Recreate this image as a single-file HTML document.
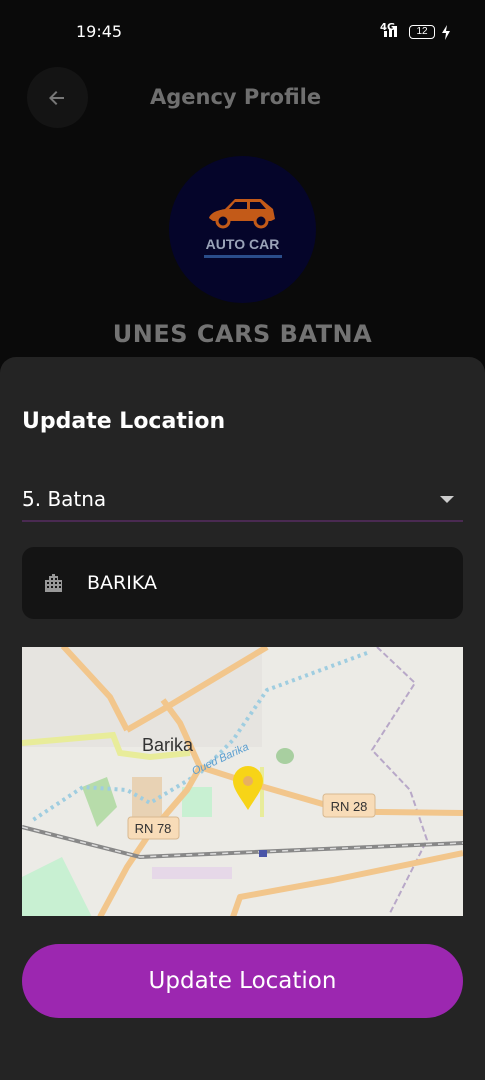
<!DOCTYPE html>
<html><head><meta charset="utf-8">
<style>
*{margin:0;padding:0;box-sizing:border-box}
body{width:485px;height:1080px;background:#0a0a0a;font-family:"Liberation Sans","DejaVu Sans",sans-serif;position:relative;overflow:hidden}
.abs{position:absolute}
</style></head><body>
<div class="abs" style="left:76px;top:22px;color:#fff;font-size:16px;font-family:'DejaVu Sans',sans-serif">19:45</div>
<div class="abs" style="left:380px;top:22px;color:#fff;font-size:10px;font-weight:bold;font-family:'DejaVu Sans',sans-serif">4G</div>
<svg class="abs" style="left:384px;top:25px" width="20" height="14"><rect x="0" y="6" width="3" height="6" fill="#fff"/><rect x="5" y="4" width="3" height="8" fill="#fff"/><rect x="10" y="1" width="3" height="11" fill="#fff"/></svg>
<div class="abs" style="left:409px;top:25px;width:26px;height:14px;border:1.5px solid #fff;border-radius:4px;color:#fff;font-size:10px;text-align:center;line-height:11px">12</div>
<svg class="abs" style="left:441px;top:25px" width="10" height="15"><path d="M6 0L1 8h4l-1 7 5-9H5z" fill="#fff"/></svg>

<div class="abs" style="left:27px;top:67px;width:61px;height:61px;border-radius:50%;background:#141414"></div>
<svg class="abs" style="left:45px;top:86px" width="24" height="24"><path d="M19 11H7.8l4.6-4.6L11 5l-7 7 7 7 1.4-1.4L7.8 13H19z" fill="#777"/></svg>
<div class="abs" style="left:150px;top:85px;color:#6f6f6f;font-size:21px;font-weight:bold;font-family:'DejaVu Sans',sans-serif">Agency Profile</div>

<div class="abs" style="left:169px;top:156px;width:147px;height:147px;border-radius:50%;background:#05052a"></div>
<svg class="abs" style="left:205px;top:196px" width="76" height="40"><path d="M4 22c2-6 10-8 16-9l10-10h26l12 10 2 10-4 2H8z" fill="#c35a18"/><circle cx="18" cy="25" r="6" fill="#05052a" stroke="#c35a18" stroke-width="3"/><circle cx="56" cy="25" r="6" fill="#05052a" stroke="#c35a18" stroke-width="3"/><path d="M30 6h12v7H24zM45 6h10l6 7H45z" fill="#05052a"/></svg>
<div class="abs" style="left:169px;top:236px;width:147px;text-align:center;color:#9aa3b8;font-size:14px;font-weight:bold">AUTO CAR</div>
<div class="abs" style="left:204px;top:255px;width:78px;height:3px;background:#2a4d8a"></div>

<div class="abs" style="left:0;top:320px;width:485px;text-align:center;color:#737373;font-size:24px;font-weight:bold;font-family:'DejaVu Sans',sans-serif;letter-spacing:0.5px">UNES CARS BATNA</div>

<div class="abs" style="left:0;top:357px;width:485px;height:723px;background:#242424;border-radius:16px 16px 0 0"></div>
<div class="abs" style="left:22px;top:409px;color:#fff;font-size:22px;font-weight:bold;font-family:'DejaVu Sans',sans-serif">Update Location</div>
<div class="abs" style="left:22px;top:487px;color:#fff;font-size:20px;font-family:'DejaVu Sans',sans-serif">5. Batna</div>
<svg class="abs" style="left:440px;top:496px" width="14" height="8"><path d="M0 0h14L7 7z" fill="#ccc"/></svg>
<div class="abs" style="left:22px;top:520px;width:441px;height:2px;background:#4a2a52"></div>

<div class="abs" style="left:22px;top:547px;width:441px;height:72px;background:#141414;border-radius:12px"></div>
<svg class="abs" style="left:43px;top:572px" width="22" height="22"><path d="M2 20V8h4V4h3V2h3v2h3v4h4v12z" fill="#999"/><g fill="#141414"><rect x="4" y="10" width="2" height="2"/><rect x="4" y="14" width="2" height="2"/><rect x="8" y="6" width="2" height="2"/><rect x="8" y="10" width="2" height="2"/><rect x="8" y="14" width="2" height="2"/><rect x="12" y="6" width="2" height="2"/><rect x="12" y="10" width="2" height="2"/><rect x="12" y="14" width="2" height="2"/><rect x="16" y="10" width="2" height="2"/><rect x="16" y="14" width="2" height="2"/></g></svg>
<div class="abs" style="left:87px;top:572px;color:#fff;font-size:19px;font-family:'DejaVu Sans',sans-serif">BARIKA</div>

<svg class="abs" style="left:22px;top:647px" width="441" height="269" viewBox="0 0 441 269">
<rect width="441" height="269" fill="#ecebe6"/>
<rect x="0" y="0" width="240" height="100" fill="#e6e4e0"/>
<rect x="110" y="130" width="30" height="40" fill="#e8d2b4"/>
<path d="M60 140l25-10 10 30-20 20z" fill="#b7dcaa"/>
<path d="M0 230l40-20 30 60H0z" fill="#c8f0d2"/>
<rect x="160" y="140" width="30" height="30" fill="#c8f0d2"/>
<rect x="130" y="220" width="80" height="12" fill="#e6d8e8"/>
<ellipse cx="263" cy="109" rx="9" ry="8" fill="#a8cfa0"/>
<path d="M345 6L245 43L211 93L178 126L128 156L105 143L61 140L11 173" fill="none" stroke="#9fcde0" stroke-width="4" stroke-dasharray="3 4"/>
<path d="M355 0L393 36L350 103L388 143L405 193L368 266" fill="none" stroke="#b8a8c8" stroke-width="2" stroke-dasharray="6 3"/>
<path d="M0 96L91 88L98 106L128 110L168 106" fill="none" stroke="#e8ec9a" stroke-width="6"/>
<path d="M240 120L240 170" fill="none" stroke="#e8ec9a" stroke-width="4"/>
<g fill="none" stroke="#f2c68c" stroke-width="6" stroke-linejoin="round">
<path d="M41 -1L88 50L105 83"/>
<path d="M105 83L145 60L245 0"/>
<path d="M141 53L158 76L178 120"/>
<path d="M178 120L228 136L311 160L355 165L441 166"/>
<path d="M178 120L165 143L128 186L105 220L78 270"/>
<path d="M211 270L218 250L311 233L441 206"/>
</g>
<path d="M0 180L118 210L441 196" fill="none" stroke="#888" stroke-width="4"/>
<path d="M0 180L118 210L441 196" fill="none" stroke="#ddd" stroke-width="1.5" stroke-dasharray="6 6"/>
<rect x="237" y="203" width="8" height="7" fill="#4a55a8"/>
<text x="120" y="104" font-family="Liberation Sans,sans-serif" font-size="18" fill="#333">Barika</text>
<text x="172" y="128" font-family="Liberation Sans,sans-serif" font-size="11" font-style="italic" fill="#5a9ed0" transform="rotate(-25 172 128)">Oued Barika</text>
<rect x="301" y="147" width="52" height="23" rx="3" fill="#f8dcb8" stroke="#d8b890"/>
<text x="327" y="164" text-anchor="middle" font-family="Liberation Sans,sans-serif" font-size="13" fill="#333">RN 28</text>
<rect x="106" y="170" width="51" height="22" rx="3" fill="#f8dcb8" stroke="#d8b890"/>
<text x="131" y="186" text-anchor="middle" font-family="Liberation Sans,sans-serif" font-size="13" fill="#333">RN 78</text>
<path d="M226 163C218 150 211 142 211 134a15 15 0 0 1 30 0c0 8-7 16-15 29z" fill="#f7d417"/>
<circle cx="226" cy="134" r="5" fill="#e8b060"/>
</svg>

<div class="abs" style="left:22px;top:944px;width:441px;height:74px;background:#9c27b0;border-radius:37px;color:#fff;font-size:23px;text-align:center;line-height:74px;font-family:'DejaVu Sans',sans-serif">Update Location</div>
</body></html>
